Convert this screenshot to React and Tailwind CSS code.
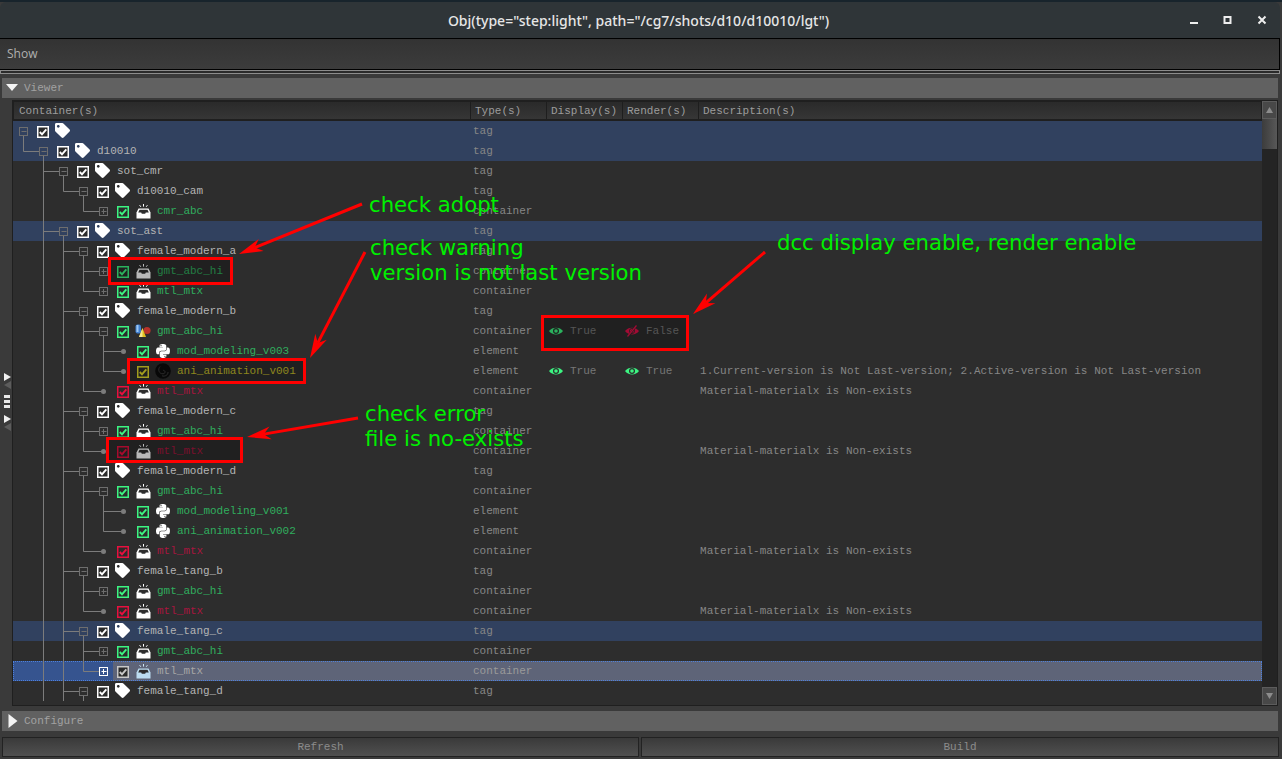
import React from "react";
import { FaTag, FaPython } from "react-icons/fa";

const C = { tag: "#b4b4b4", ok: "#30ad5e", bad: "#a8153f", warn: "#c2bb2a", sel: "#a6a6a6" };
const BOX = { ok: "#3cf582", bad: "#e8103f", warn: "#e0d82a", tag: "#ffffff", sel: "#c8c8c8" };

const rows = [
  { l: 0, n: "", k: "tag", b: "minus", hi: 1 },
  { l: 1, n: "d10010", k: "tag", b: "minus", hi: 1 },
  { l: 2, n: "sot_cmr", k: "tag", b: "minus" },
  { l: 3, n: "d10010_cam", k: "tag", b: "minus" },
  { l: 4, n: "cmr_abc", k: "ok", b: "plus", t: "container" },
  { l: 2, n: "sot_ast", k: "tag", b: "minus", hi: 1 },
  { l: 3, n: "female_modern_a", k: "tag", b: "minus" },
  { l: 4, n: "gmt_abc_hi", k: "ok", b: "plus", t: "container" },
  { l: 4, n: "mtl_mtx", k: "ok", b: "plus", t: "container" },
  { l: 3, n: "female_modern_b", k: "tag", b: "minus" },
  { l: 4, n: "gmt_abc_hi", k: "ok", b: "minus", t: "container", icon: "maya", dis: ["on", "True"], ren: ["off", "False"] },
  { l: 5, n: "mod_modeling_v003", k: "ok", b: "dot", t: "element", icon: "py" },
  { l: 5, n: "ani_animation_v001", k: "warn", b: "dot", t: "element", icon: "dark", dis: ["on", "True"], ren: ["on", "True"], d: "1.Current-version is Not Last-version; 2.Active-version is Not Last-version", wide: 1 },
  { l: 4, n: "mtl_mtx", k: "bad", b: "dot", t: "container", d: "Material-materialx is Non-exists" },
  { l: 3, n: "female_modern_c", k: "tag", b: "minus" },
  { l: 4, n: "gmt_abc_hi", k: "ok", b: "plus", t: "container" },
  { l: 4, n: "mtl_mtx", k: "bad", b: "dot", t: "container", d: "Material-materialx is Non-exists" },
  { l: 3, n: "female_modern_d", k: "tag", b: "minus" },
  { l: 4, n: "gmt_abc_hi", k: "ok", b: "minus", t: "container" },
  { l: 5, n: "mod_modeling_v001", k: "ok", b: "dot", t: "element", icon: "py" },
  { l: 5, n: "ani_animation_v002", k: "ok", b: "dot", t: "element", icon: "py" },
  { l: 4, n: "mtl_mtx", k: "bad", b: "dot", t: "container", d: "Material-materialx is Non-exists" },
  { l: 3, n: "female_tang_b", k: "tag", b: "minus" },
  { l: 4, n: "gmt_abc_hi", k: "ok", b: "plus", t: "container" },
  { l: 4, n: "mtl_mtx", k: "bad", b: "dot", t: "container", d: "Material-materialx is Non-exists" },
  { l: 3, n: "female_tang_c", k: "tag", b: "minus", hi: 1 },
  { l: 4, n: "gmt_abc_hi", k: "ok", b: "plus", t: "container" },
  { l: 4, n: "mtl_mtx", k: "sel", b: "plus", t: "container", sel: 1 },
  { l: 3, n: "female_tang_d", k: "tag", b: "minus" },
];

function hasNext(i, level) {
  for (let j = i + 1; j < rows.length; j++) {
    if (rows[j].l < level) return false;
    if (rows[j].l === level) return true;
  }
  return level === 2 || level === 3;
}

function Branch({ i, r }) {
  const L = r.l;
  const w = 20 * (L + 1);
  const col = "#7c7c7c";
  const cx = (c) => 10.5 + 20 * c;
  const lines = [];
  for (let c = 0; c < L - 1; c++) {
    let cont = false;
    for (let j = i; j >= 0; j--) {
      if (rows[j].l === c + 1) { cont = hasNext(j, c + 1); break; }
    }
    if (cont) lines.push(<line key={"v" + c} x1={cx(c)} x2={cx(c)} y1="0" y2="20" stroke={col} />);
  }
  if (L > 0) {
    const x = cx(L - 1);
    lines.push(<line key="c" x1={x} x2={x} y1="0" y2={hasNext(i, L) ? 20 : 10.5} stroke={col} />);
    lines.push(<line key="h" x1={x} x2={r.b === "dot" ? cx(L) : cx(L) - 4} y1="10.5" y2="10.5" stroke={col} />);
  }
  if (r.b === "minus") lines.push(<line key="s" x1={cx(L)} x2={cx(L)} y1="14" y2="20" stroke={col} />);
  const bc = r.sel ? "#ffffff" : "#6e6e6e";
  return (
    <svg width={w} height="20" className="shrink-0">
      {lines}
      {r.b === "dot" ? (
        <circle cx={cx(L)} cy="10.5" r="2.5" fill="#7c7c7c" />
      ) : (
        <g>
          <rect x={cx(L) - 4} y="6.5" width="8" height="8" fill="none" stroke={bc} />
          <line x1={cx(L) - 2} x2={cx(L) + 3} y1="10.5" y2="10.5" stroke={bc} />
          {r.b === "plus" && <line x1={cx(L)} x2={cx(L)} y1="8" y2="13" stroke={bc} />}
        </g>
      )}
    </svg>
  );
}

function Check({ k }) {
  const c = BOX[k];
  return (
    <svg width="12" height="12" viewBox="0 0 12 12" className="ml-1 mt-[5px] shrink-0">
      <rect x="0.75" y="0.75" width="10.5" height="10.5" fill="#2b2b2b" stroke={c} strokeWidth="1.5" />
      <path d="M2.8 6 L5 8.4 L9.3 3.4" fill="none" stroke={c} strokeWidth="1.9" />
    </svg>
  );
}

function Inbox({ sel }) {
  return (
    <svg width="15" height="15" viewBox="0 0 15 15" className="mt-[3px] ml-[3px]">
      <path d="M7.5 0v2.6M3.6 1.2l1.2 1.6M11.4 1.2l-1.2 1.6" stroke={sel ? "#cfe6f5" : "#fff"} strokeWidth="1" fill="none" />
      <path d="M2.5 4.5h10l2 4v6H0.500v-6z" fill={sel ? "#bcdcf0" : "#fff"} />
      <path d="M3.500 5.800h8l1.300 2.700H9.800l-.6 1.200H5.800L5.200 8.500H2.200z" fill="#2d2d2d" />
    </svg>
  );
}

function Maya() {
  return (
    <svg width="16" height="14" viewBox="0 0 16 14" className="mt-[3px] ml-[2px]">
      <rect x="0.5" y="0.5" width="5.5" height="9" rx="2" fill="#3f7fd0" />
      <rect x="1.5" y="1" width="2" height="7" fill="#9cc6f0" />
      <circle cx="12" cy="6.5" r="3.6" fill="#b8322a" />
      <path d="M7.5 4 L11 13 H4z" fill="#e0c020" />
      <path d="M7.5 4 L7.5 13 H4z" fill="#f5e690" />
    </svg>
  );
}

function Dark() {
  return (
    <svg width="16" height="16" viewBox="0 0 16 16" className="mt-[2px] ml-[2px]">
      <circle cx="8" cy="8" r="7.8" fill="#0c0c0c" />
      <path d="M5 3.500C2.500 6.500 4 11 8 10.800 11 10.600 10.500 7 8 7.400M13 9c.5 3-3.500 5-6 3.800" fill="none" stroke="#3c3c3c" strokeWidth="1" />
    </svg>
  );
}

function RowIcon({ r }) {
  if (r.k === "tag") return <FaTag size={15} className="mt-[2px] ml-[2px]" color="#fff" />;
  if (r.icon === "py") return <FaPython size={16} className="mt-[2px] ml-[2px]" color="#fff" />;
  if (r.icon === "maya") return <Maya />;
  if (r.icon === "dark") return <Dark />;
  return <Inbox sel={r.sel} />;
}

function Eye({ on }) {
  const c = on ? "#3cf582" : "#e01048";
  return (
    <svg width="14" height="12" viewBox="0 0 14 12" className="ml-[2px] shrink-0">
      <path d="M0 6C3 1.500 11 1.500 14 6 11 10.500 3 10.500 0 6z" fill={c} />
      {on ? (
        <g>
          <circle cx="7" cy="6" r="3" fill="#2d2d2d" />
          <circle cx="7" cy="6" r="1.800" fill={c} />
        </g>
      ) : (
        <g>
          <circle cx="7" cy="6" r="2.600" fill="none" stroke="#2d2d2d" strokeWidth="0.800" />
          <path d="M3.300 12L11.300 0" stroke="#2d2d2d" strokeWidth="2.200" />
          <path d="M2.500 11.500L11.500 0.500" stroke={c} strokeWidth="1.200" />
        </g>
      )}
    </svg>
  );
}

function Vis({ v }) {
  if (!v) return null;
  return (
    <div className="flex items-center h-5 text-[#767676]">
      <Eye on={v[0] === "on"} />
      <span className="ml-[7px]">{v[1]}</span>
    </div>
  );
}

function Row({ r, i }) {
  const bg = r.sel ? "bg-[#5e6478]" : r.hi ? "bg-[#31415f]" : "";
  return (
    <div className={`relative flex h-5 shrink-0 ${bg}`}>
      {r.sel && <div className="absolute left-0 top-0 h-5 w-[100px] bg-[#36548f]" />}
      {r.sel && <div className="absolute inset-0 border border-dotted border-[#4d80dc]" />}
      <div className="relative flex w-[458px] shrink-0">
        <Branch i={i} r={r} />
        <div className="w-5 shrink-0"><Check k={r.k} /></div>
        <div className="w-5 shrink-0"><RowIcon r={r} /></div>
        <span className="ml-1 whitespace-pre leading-5" style={{ color: C[r.k] }}>{r.n}</span>
      </div>
      <div className={`relative w-[76px] shrink-0 pl-[2px] leading-5 ${r.sel ? "text-[#9a9a9a]" : "text-[#868686]"}`}>{r.t || "tag"}</div>
      <div className="relative w-[76px] shrink-0"><Vis v={r.dis} /></div>
      <div className="relative w-[76px] shrink-0"><Vis v={r.ren} /></div>
      <div className={`relative pl-px leading-5 text-[#868686] whitespace-pre ${r.wide ? "tracking-[0.08px]" : "tracking-[0.03px]"}`}>{r.d || ""}</div>
    </div>
  );
}

function HeadCell({ w, first, children }) {
  return (
    <div className={`${w} h-[17px] shrink-0 ${first ? "pl-[5px]" : "pl-1"} leading-[19px] border-r border-[#1e1e1e] bg-gradient-to-b from-[#2a2a2a] to-[#363636] text-[#9c9c9c]`}>{children}</div>
  );
}

function Arrow({ x1, y1, x2, y2 }) {
  const a = Math.atan2(y2 - y1, x2 - x1);
  const len = 24, hw = 6.5;
  const bx = x2 - len * Math.cos(a), by = y2 - len * Math.sin(a);
  const nx = -Math.sin(a), ny = Math.cos(a);
  const mx = x2 - (len - 7) * Math.cos(a), my = y2 - (len - 7) * Math.sin(a);
  return (
    <g>
      <line x1={x1} y1={y1} x2={mx} y2={my} stroke="#ff0000" strokeWidth="3" />
      <polygon points={`${x2},${y2} ${bx + nx * hw},${by + ny * hw} ${mx},${my} ${bx - nx * hw},${by - ny * hw}`} fill="#ff0000" />
    </g>
  );
}

function Note({ x, y, children }) {
  return (
    <div className="absolute whitespace-pre text-[21.2px] leading-6 text-[#00f000] font-['DejaVu_Sans',sans-serif]" style={{ left: x, top: y }}>{children}</div>
  );
}

function Tri({ gray, dir }) {
  return (
    <svg width="7" height="8" viewBox="0 0 7 8" className="block">
      <path d={dir === "r" ? "M0 0L7 4L0 8z" : "M7 0L0 4L7 8z"} fill={gray ? "#5c5c5c" : "#f0f0f0"} />
    </svg>
  );
}

export default function App() {
  return (
    <div className="relative w-[1282px] h-[759px] overflow-hidden bg-[#3a3a3a] flex flex-col font-['Liberation_Mono',monospace] text-[11px]">
      <div className="h-[2px] shrink-0 bg-[#18242c]" />
      <div className="h-9 shrink-0 mr-[2px] rounded-t-md bg-[#2f3538] flex items-center relative">
        <div className="flex-1 text-center text-[14px] pr-[3px] text-[#e6e6e6] font-['Noto_Sans',sans-serif] font-medium">Obj(type="step:light", path="/cg7/shots/d10/d10010/lgt")</div>
        <svg width="90" height="36" viewBox="0 0 90 36" className="absolute left-[1186px] top-0">
          <rect x="4" y="20" width="8" height="2" fill="#eee" />
          <rect x="38.500" y="15" width="6" height="6" fill="none" stroke="#eee" strokeWidth="2" />
          <path d="M72.500 14.500l7 7M79.500 14.500l-7 7" stroke="#eee" strokeWidth="2" fill="none" />
        </svg>
      </div>
      <div className="h-[32px] shrink-0 mr-[2px] border-y border-black border-r bg-gradient-to-b from-[#333333] to-[#3c3c3c] flex items-center pl-[7px] text-[12px] text-[#b0b0b0] font-['Open_Sans',sans-serif]">Show</div>
      <div className="h-[4px] shrink-0 mr-[2px] border border-[#8c8c8c] bg-[#2a2a2a]" />
      <div className="h-[4px] shrink-0" />
      <div className="h-5 shrink-0 mx-[2px] mr-[4px] bg-[#616161] flex items-center text-[#a2a2a2]">
        <svg width="22" height="20" viewBox="0 0 22 20" className="shrink-0">
          <path d="M4 6h12l-6 7z" fill="#f4f4f4" />
        </svg>
        <span>Viewer</span>
      </div>
      <div className="flex flex-1 min-h-0 mt-[2px]">
        <div className="w-3 shrink-0 flex flex-col pl-1 pt-[273px] text-white">
          <Tri dir="r" />
          <Tri dir="l" gray />
          <div className="mt-[6px] flex flex-col gap-[2px]">
            <div className="w-[6px] h-[3px] bg-[#e8e8e8]" />
            <div className="w-[6px] h-[3px] bg-[#e8e8e8]" />
            <div className="w-[6px] h-[3px] bg-[#e8e8e8]" />
          </div>
          <div className="mt-[7px]"><Tri dir="r" /></div>
          <Tri dir="l" gray />
        </div>
        <div className="w-[1266px] shrink-0 h-[606px] border border-[#1f1f1f] bg-[#2d2d2d] flex overflow-hidden">
          <div className="w-[1249px] shrink-0 flex flex-col overflow-hidden">
            <div className="flex shrink-0 h-5 pt-px pl-px bg-[#1f1f1f]">
              <HeadCell w="w-[457px]" first>Container(s)</HeadCell>
              <HeadCell w="w-[76px]">Type(s)</HeadCell>
              <HeadCell w="w-[76px]">Display(s)</HeadCell>
              <HeadCell w="w-[76px]">Render(s)</HeadCell>
              <HeadCell w="w-[563px]">Description(s)</HeadCell>
            </div>
            {rows.map((r, i) => <Row key={i} r={r} i={i} />)}
          </div>
          <div className="w-[15px] shrink-0 flex flex-col bg-[#242424]">
            <div className="h-[18px] shrink-0 bg-[#484848] border border-[#5c5c5c] flex items-center justify-center">
              <svg width="7" height="6"><path d="M3.500 0L7 6H0z" fill="#8c8c8c" /></svg>
            </div>
            <div className="h-[30px] shrink-0 bg-gradient-to-r from-[#3c3c3c] to-[#585858]" />
            <div className="flex-1" />
            <div className="h-[18px] shrink-0 bg-[#484848] border border-[#5c5c5c] flex items-center justify-center">
              <svg width="7" height="6"><path d="M0 0H7L3.500 6z" fill="#8c8c8c" /></svg>
            </div>
          </div>
        </div>
      </div>
      <div className="h-5 shrink-0 ml-[2px] mr-[4px] mb-[6px] bg-[#616161] flex items-center text-[#a2a2a2]">
        <svg width="22" height="20" viewBox="0 0 22 20" className="shrink-0">
          <path d="M6.500 3l9 7-9 7z" fill="#f4f4f4" />
        </svg>
        <span>Configure</span>
      </div>
      <div className="h-5 shrink-0 mb-[2px] mx-[2px] mr-[3px] flex gap-[2px] text-[#8c8c8c]">
        <div className="w-[637px] border border-[#222] bg-gradient-to-b from-[#3a3a3a] to-[#505050] flex items-center justify-center">Refresh</div>
        <div className="flex-1 border border-[#222] bg-gradient-to-b from-[#3a3a3a] to-[#505050] flex items-center justify-center">Build</div>
      </div>

      <svg width="1282" height="759" className="absolute left-0 top-0 pointer-events-none">
        <rect x="109.500" y="258.500" width="122" height="25" fill="rgba(0,0,0,0.28)" stroke="#ff0000" strokeWidth="3" />
        <rect x="128.500" y="359.500" width="176" height="23" fill="rgba(0,0,0,0.28)" stroke="#ff0000" strokeWidth="3" />
        <rect x="107.500" y="438.500" width="134" height="23" fill="rgba(0,0,0,0.28)" stroke="#ff0000" strokeWidth="3" />
        <rect x="542.500" y="316.500" width="145" height="33" fill="rgba(0,0,0,0.28)" stroke="#ff0000" strokeWidth="3" />
        <Arrow x1={362} y1={204} x2={239} y2={254} />
        <Arrow x1={365} y1={252} x2={310} y2={358} />
        <Arrow x1={358} y1={418} x2={247} y2={437} />
        <Arrow x1={765} y1={252} x2={693} y2={314} />
      </svg>
      <Note x={369} y={193}>check adopt</Note>
      <Note x={370} y={236}>check warning</Note>
      <Note x={370} y={261}>version is not last version</Note>
      <Note x={365} y={402}>check error</Note>
      <Note x={365} y={427}>file is no-exists</Note>
      <Note x={777} y={231}>dcc display enable, render enable</Note>
    </div>
  );
}
